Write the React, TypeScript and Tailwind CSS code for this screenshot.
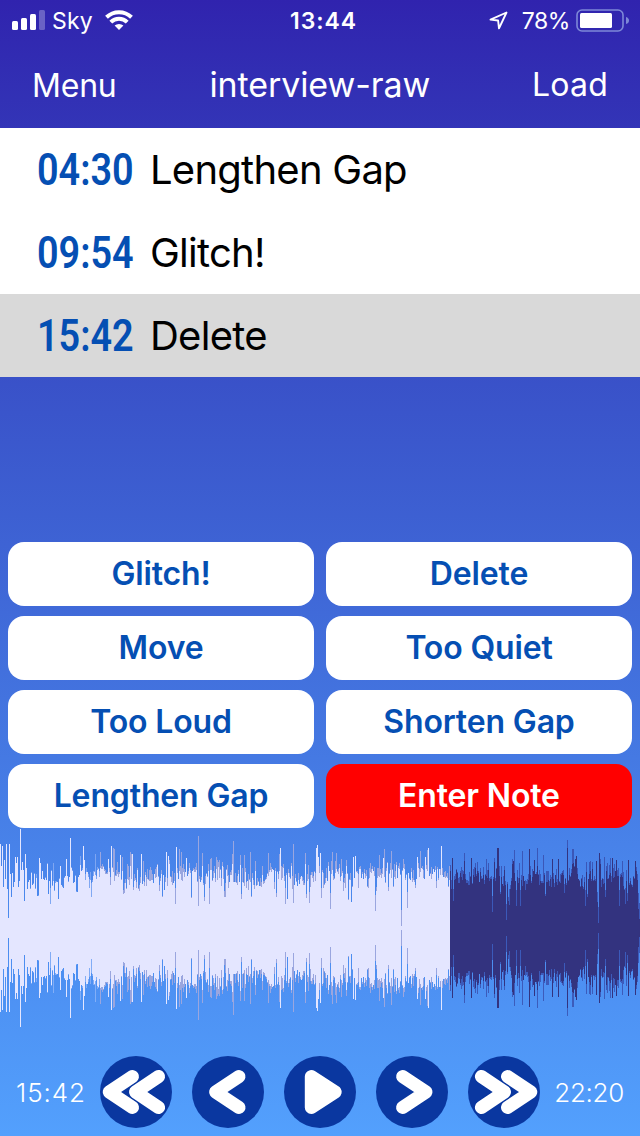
import { ReactNode } from 'react';

interface Marker {
  time: string;
  label: string;
  selected?: boolean;
}

const markers: Marker[] = [
  { time: '04:30', label: 'Lengthen Gap' },
  { time: '09:54', label: 'Glitch!' },
  { time: '15:42', label: 'Delete', selected: true },
];

const actions = [
  'Glitch!',
  'Delete',
  'Move',
  'Too Quiet',
  'Too Loud',
  'Shorten Gap',
  'Lengthen Gap',
  'Enter Note',
];

const PLAYHEAD = 450;

// [x, half height] of the loudest and quietest columns
const solidPeaks: Record<number, number> = {
  0: 84, 1: 62, 2: 82, 3: 41, 4: 68, 5: 49, 6: 84, 7: 39, 8: 10, 9: 84,
  10: 54, 11: 31, 12: 55, 13: 41, 14: 46, 15: 71, 16: 65, 17: 71, 18: 41,
  19: 47, 20: 99, 21: 58, 22: 66, 23: 58, 24: 27, 25: 74, 26: 60, 27: 39,
  28: 46, 29: 48, 30: 39, 31: 55, 32: 43, 34: 54, 36: 50, 37: 32, 38: 32,
  39: 70, 40: 65, 41: 49, 58: 29, 66: 69, 70: 90, 71: 60, 76: 36, 77: 36,
  83: 82, 84: 68, 111: 82, 112: 60, 120: 73, 132: 74, 141: 74, 162: 31,
  166: 76, 176: 81, 191: 30, 204: 27, 209: 24, 225: 31, 280: 80, 285: 24,
  309: 25, 316: 80, 317: 83, 330: 19, 351: 26, 375: 17, 383: 70, 401: 2,
  407: 20, 428: 80, 441: 82, 452: 70, 464: 67, 492: 16, 497: 80, 498: 80,
  506: 8, 516: 22, 520: 22, 529: 79, 558: 69, 567: 80, 575: 69, 585: 22,
  597: 26, 598: 5, 599: 75, 600: 64, 616: 68, 619: 22, 628: 68, 635: 67,
  638: 19, 639: 9,
};

const softPeaks: Record<number, number> = {
  36: 54, 53: 65, 95: 74, 113: 80, 114: 79, 131: 74, 143: 67, 179: 79,
  181: 76, 198: 92, 217: 68, 233: 87, 244: 73, 250: 76, 268: 75, 293: 84,
  305: 75, 317: 83, 332: 76, 336: 75, 379: 73, 384: 79, 391: 77, 420: 77,
  427: 78, 464: 75, 486: 69, 514: 78, 522: 77, 543: 73, 567: 88, 604: 71,
};

function noise(n: number): number {
  const s = Math.sin(n * 127.1 + 311.7) * 43758.5453;
  return s - Math.floor(s);
}

// slow loudness changes, interpolated between random points
function swellAt(x: number): number {
  const step = 6;
  const i = Math.floor(x / step);
  const t = x / step - i;
  return noise(i + 300) * (1 - t) + noise(i + 301) * t;
}

function solidAt(x: number): number {
  if (solidPeaks[x] !== undefined) {
    return solidPeaks[x];
  }
  const spike = noise(x + 900) > 0.82 ? noise(x + 40) * 20 : 0;
  const dip = noise(x + 2000) > 0.82 ? noise(x + 77) * 20 : 0;
  return Math.round(36 + swellAt(x) * 14 + noise(x) * 13 + spike - dip);
}

function softAt(x: number): number {
  if (softPeaks[x] !== undefined) {
    return softPeaks[x];
  }
  const solid = solidAt(x);
  if (solid > 66) {
    return solid;
  }
  if (solid < 25) {
    return solid + 16;
  }
  const spread = x < 80 ? 2 : 20;
  return Math.round(solid + noise(x + 5000) * noise(x + 7000) * spread);
}

function columns(from: number, to: number, height: (x: number) => number) {
  let d = '';
  for (let x = from; x < to; x++) {
    const h = height(x);
    d += `M${x} ${100 - h}h1v${h * 2}h-1z`;
  }
  return d;
}

const Waveform = () => (
  <svg
    className="block h-[200px] w-[640px]"
    viewBox="0 0 640 200"
    shapeRendering="crispEdges"
  >
    <path d={columns(26, 100, softAt)} fill="#e4e6ff" fillOpacity="0.35" />
    <path d={columns(100, PLAYHEAD, softAt)} fill="#9aa6df" />
    <path d={columns(PLAYHEAD, 640, softAt)} fill="#333f9c" fillOpacity="0.65" />
    <path d={columns(0, PLAYHEAD, solidAt)} fill="#e4e6ff" />
    <path d={columns(PLAYHEAD, 640, solidAt)} fill="#33337f" />
  </svg>
);

const StatusBar = () => (
  <div className="grid h-10 grid-cols-3 items-center pl-3 pr-[11px] text-[23px] text-white">
    <div className="flex items-center">
      <svg className="h-5 w-[33px]" viewBox="0 0 33 20">
        <rect x="0" y="11" width="6" height="9" rx="1.5" fill="#fff" />
        <rect x="9" y="8" width="6" height="12" rx="1.5" fill="#fff" />
        <rect x="18" y="4" width="6" height="16" rx="1.5" fill="#fff" />
        <rect x="27" y="0" width="6" height="20" rx="1.5" fill="#6a62c5" />
      </svg>
      <span className="ml-[7px] pt-0.5 leading-none tracking-[0.2px]">Sky</span>
      <svg className="ml-3 h-5 w-7" viewBox="0 0 28 20">
        <g fill="none" stroke="#fff" strokeWidth="4">
          <path d="M1.5 7.3a18 18 0 0 1 25 0" />
          <path d="M5.8 12.2a11.6 11.6 0 0 1 16.4 0" />
        </g>
        <path d="M9.6 15.6a6.6 6.6 0 0 1 8.8 0L14 20z" fill="#fff" />
      </svg>
    </div>
    <div className="pl-1.5 pt-0.5 text-center font-semibold leading-none tracking-[0.9px]">
      13:44
    </div>
    <div className="flex items-center justify-end">
      <svg className="h-[19px] w-[19px]" viewBox="0 0 19 19">
        <path
          d="M17.5 1.5 1.5 8.6l7.6.9.9 7.8z"
          fill="none"
          stroke="#fff"
          strokeWidth="1.9"
          strokeLinejoin="round"
        />
      </svg>
      <span className="ml-3.5 pt-0.5 leading-none tracking-[-0.4px]">78%</span>
      <svg className="ml-1.5 h-[23px] w-[53px]" viewBox="0 0 53 23">
        <rect
          x="1"
          y="1"
          width="46"
          height="21"
          rx="5"
          fill="none"
          stroke="#7d88d8"
          strokeWidth="1.6"
        />
        <rect x="4" y="4" width="32" height="15" rx="1.5" fill="#fff" />
        <path d="M50 8q3 1 3 3.5T50 15z" fill="#7d88d8" />
      </svg>
    </div>
  </div>
);

const MarkerRow = ({ time, label, selected }: Marker) => (
  <li
    className={`flex h-[83px] items-center pl-[37px] ${selected ? 'bg-[#d9d9d9]' : 'bg-white'}`}
  >
    <div className="w-[113px]">
      <span className="inline-block origin-left scale-x-[0.84] font-[Roboto] text-[45px] font-semibold leading-none text-[#054fb3]">
        {time}
      </span>
    </div>
    <span className="text-[40px] tracking-[-0.75px] text-black">{label}</span>
  </li>
);

const RoundButton = ({
  label,
  children,
}: {
  label: string;
  children: ReactNode;
}) => (
  <button
    aria-label={label}
    className="size-[72px] overflow-hidden rounded-full bg-[#0a37a0]"
  >
    <svg
      className="size-full"
      viewBox="0 0 72 72"
      fill="none"
      stroke="#fff"
      strokeWidth="13"
      strokeLinecap="round"
      strokeLinejoin="round"
    >
      {children}
    </svg>
  </button>
);

const DoubleChevron = () => (
  <>
    <path d="M32.5 20.5 9.2 36l23.3 15.5" />
    <path d="M58.6 20.5 35.5 36l23.1 15.5" stroke="#0a37a0" strokeWidth="15" />
    <path d="M58.6 20.5 35.5 36l23.1 15.5" />
  </>
);

const App = () => {
  return (
    <div className="flex h-[1136px] w-[640px] flex-col overflow-hidden bg-linear-to-b from-[#3023ae] to-[#53a0fd] font-[Inter,sans-serif]">
      <StatusBar />
      <header className="flex h-[88px] items-center justify-between pl-8 pr-8 pt-1 text-[32px] text-white">
        <button className="tracking-[-0.2px]">Menu</button>
        <h1 className="mr-[9px] pb-1 text-[34px] tracking-[-0.1px]">
          interview-raw
        </h1>
        <button className="pb-0.5 tracking-[0.2px]">Load</button>
      </header>

      <ul>
        {markers.map((marker) => (
          <MarkerRow key={marker.time} {...marker} />
        ))}
      </ul>

      <div className="mt-auto grid grid-cols-2 gap-x-3 gap-y-2.5 px-2">
        {actions.map((action) => (
          <button
            key={action}
            className={`h-16 rounded-2xl text-[32px] font-semibold tracking-[-0.15px] ${
              action === 'Enter Note'
                ? 'bg-[#ff0000] text-white'
                : 'bg-white text-[#054fb3]'
            }`}
          >
            {action}
          </button>
        ))}
      </div>

      <Waveform />

      <footer className="flex h-[108px] items-center justify-between pb-2 pl-4 pr-4 pt-7 text-[26px] text-white">
        <span className="w-[84px] font-light tracking-[0.9px]">15:42</span>
        <div className="flex gap-5">
          <RoundButton label="Rewind">
            <DoubleChevron />
          </RoundButton>
          <RoundButton label="Back">
            <path d="M47 20.5 23.6 36 47 51.5" />
          </RoundButton>
          <RoundButton label="Play">
            <path d="M27.3 20.5v31L51.2 36z" fill="#fff" />
          </RoundButton>
          <RoundButton label="Forward">
            <path d="M26.6 20.5 50 36 26.6 51.5" />
          </RoundButton>
          <RoundButton label="Fast forward">
            <g transform="translate(72 0) scale(-1 1)">
              <DoubleChevron />
            </g>
          </RoundButton>
        </div>
        <span className="w-[84px] text-right font-light tracking-[-0.3px]">
          22:20
        </span>
      </footer>
    </div>
  );
};

export default App;
